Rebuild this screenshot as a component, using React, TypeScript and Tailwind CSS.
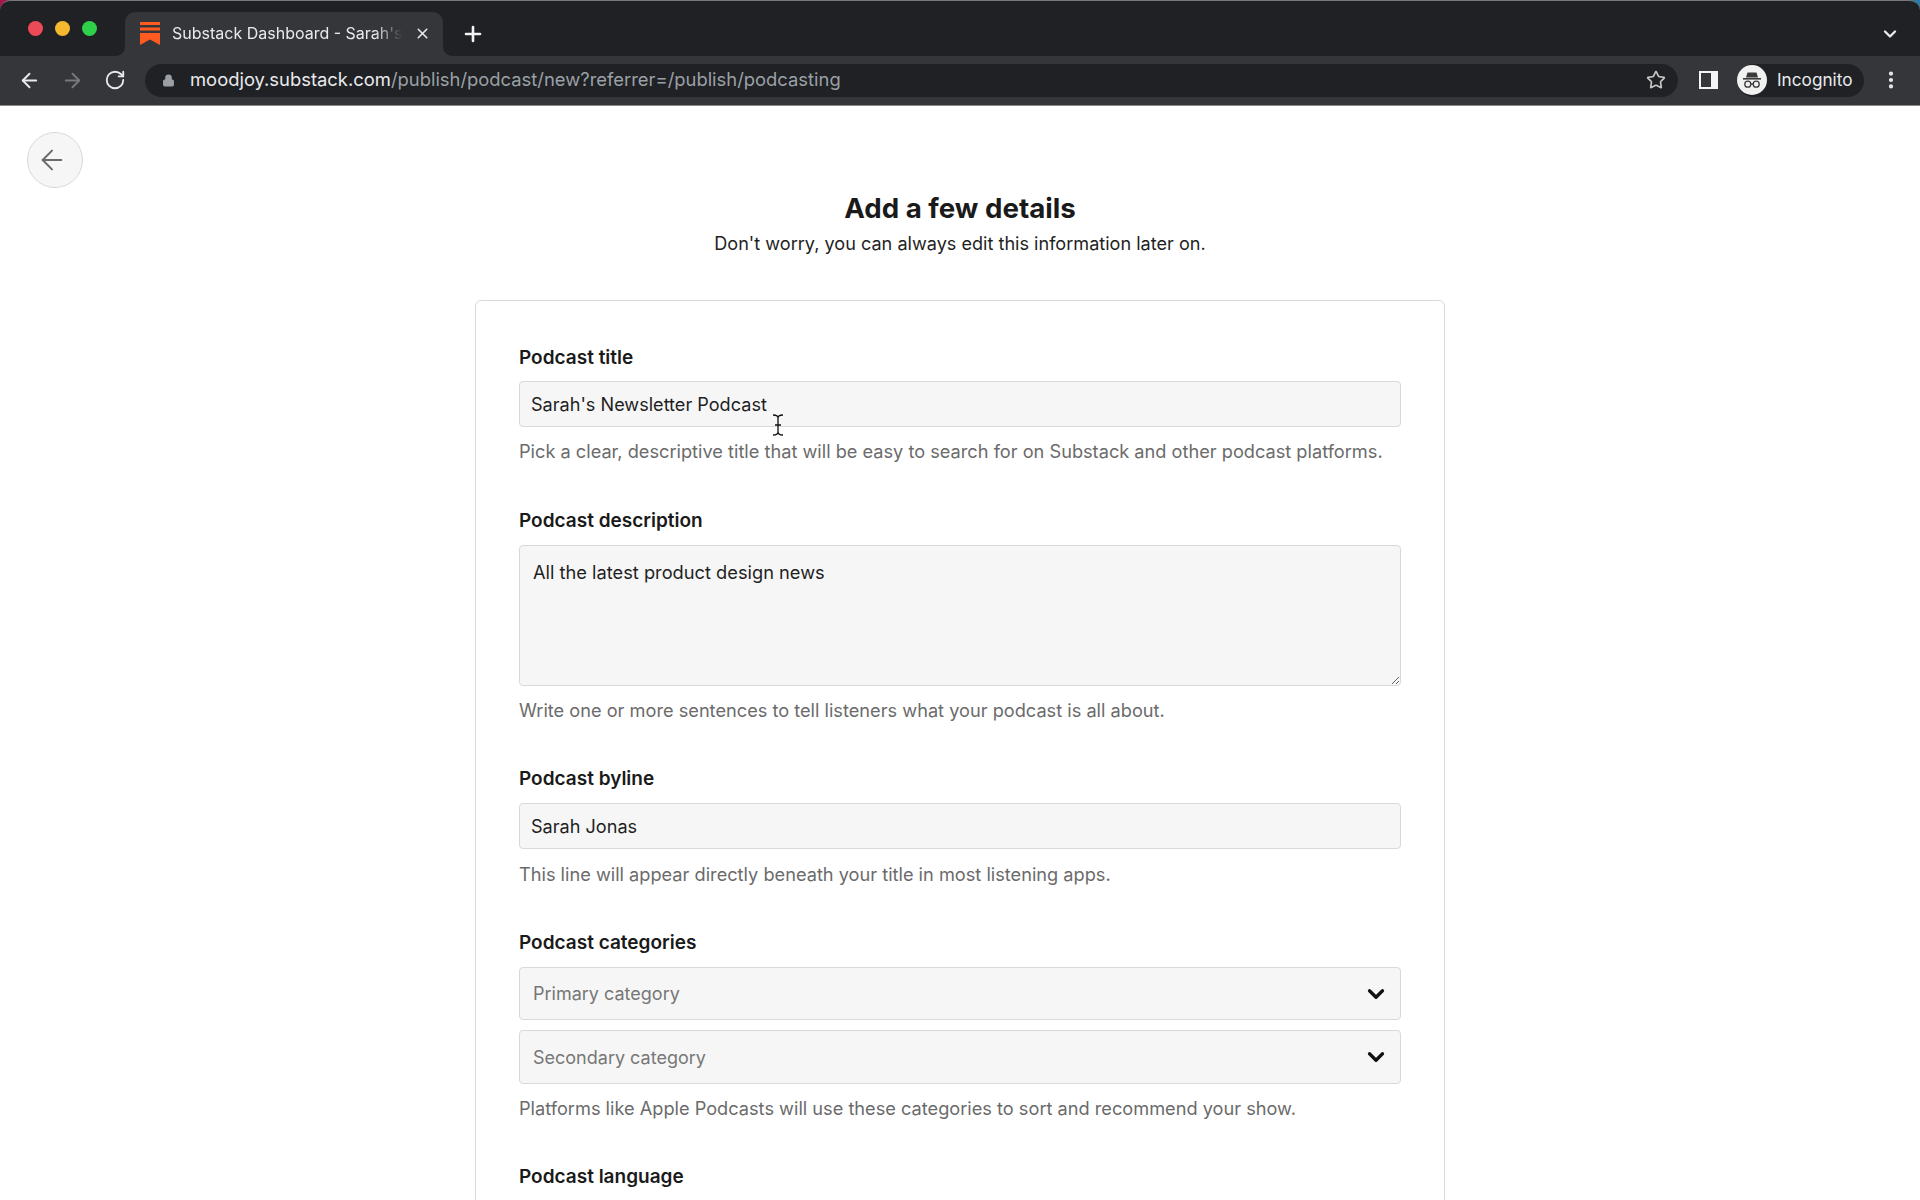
import { ArrowLeft, ArrowRight, ChevronDown, Lock, MoreVertical, Plus, RotateCw, Star, X } from 'lucide-react';

function Field({ label, hint, tight, children }: { label: string; hint?: string; tight?: boolean; children?: React.ReactNode }) {
  return (
    <div className={tight ? 'pb-px' : ''}>
      <div className={`text-[19px] leading-[24px] font-semibold text-[#1a1a1a] ${tight ? 'mb-[11px]' : 'mb-[12px]'}`}>{label}</div>
      {children}
      {hint && <div className="mt-[11px] text-[18.2px] leading-[26px] text-[#6b6b6b]">{hint}</div>}
    </div>
  );
}

function TextInput({ value }: { value: string }) {
  return (
    <input
      readOnly
      value={value}
      className="block w-full h-[46px] px-[11px] text-[18.1px] text-[#1f1f1f] bg-[#f6f6f6] border border-[#d9d9d9] rounded-[4px] outline-none"
    />
  );
}

function SelectBox({ placeholder, tall }: { placeholder: string; tall?: boolean }) {
  return (
    <div className={`flex items-center justify-between ${tall ? 'h-[54px]' : 'h-[53px]'} pl-[13px] pr-[11px] bg-[#f6f6f6] border border-[#d9d9d9] rounded-[4px]`}>
      <span className="text-[18px] text-[#777777]">{placeholder}</span>
      <ChevronDown className="w-[26px] h-[26px] text-[#111111]" strokeWidth={3} />
    </div>
  );
}

function Favicon() {
  return (
    <svg width="20" height="23" viewBox="0 0 20 23" className="shrink-0">
      <rect x="0" y="0" width="20" height="3" fill="#ff5a1f" />
      <rect x="0" y="5.5" width="20" height="3" fill="#ff5a1f" />
      <path d="M0 11h20v12l-10-5.5L0 23z" fill="#ff5a1f" />
    </svg>
  );
}

function IncognitoIcon() {
  return (
    <svg width="30" height="30" viewBox="0 0 30 30">
      <circle cx="15" cy="15" r="15" fill="#f1f1f1" />
      <path d="M10.5 7.5h9l1.5 5h-12z" fill="#3a3a3c" />
      <rect x="6" y="13" width="18" height="1.6" fill="#3a3a3c" />
      <circle cx="10.8" cy="19.2" r="3" fill="none" stroke="#3a3a3c" strokeWidth="1.3" />
      <circle cx="19.2" cy="19.2" r="3" fill="none" stroke="#3a3a3c" strokeWidth="1.3" />
      <path d="M13.8 19h2.4" stroke="#3a3a3c" strokeWidth="1.3" />
    </svg>
  );
}

function Tab() {
  return (
    <div className="relative flex items-center w-[318px] h-[44px] pl-[15px] pr-[12px] pb-[2px] bg-[#35363a] rounded-t-[10px]">
      <svg width="10" height="10" viewBox="0 0 10 10" className="absolute left-[-10px] bottom-0">
        <path d="M10 0v10H0C6 10 10 6 10 0z" fill="#35363a" />
      </svg>
      <svg width="10" height="10" viewBox="0 0 10 10" className="absolute right-[-10px] bottom-0">
        <path d="M0 0v10h10C4 10 0 6 0 0z" fill="#35363a" />
      </svg>
      <Favicon />
      <span className="ml-[12px] w-[230px] whitespace-nowrap text-[16px] text-[#e8eaed] [mask-image:linear-gradient(to_right,black_88%,transparent)]">
        Substack Dashboard - Sarah's
      </span>
      <X className="ml-auto w-[17px] h-[17px] text-[#e8eaed]" strokeWidth={2.2} />
    </div>
  );
}

function Toolbar() {
  return (
    <div className="flex items-center h-[50px] pb-px bg-[#35363a] border-b border-[#8a8a8a]">
      <ArrowLeft className="ml-[18px] w-[23px] h-[23px] text-[#e8eaed]" strokeWidth={2} />
      <ArrowRight className="ml-[20px] w-[23px] h-[23px] text-[#77787b]" strokeWidth={2} />
      <RotateCw className="ml-[20px] w-[22px] h-[22px] text-[#e8eaed]" strokeWidth={2} />
      <div className="flex items-center ml-[19px] w-[1533px] h-[33px] pl-[17px] pr-[12px] bg-[#202124] rounded-full">
        <Lock className="w-[13px] h-[13px] text-[#9aa0a6]" fill="#9aa0a6" strokeWidth={2} />
        <span className="ml-[15px] text-[18.4px] text-[#e8eaed] whitespace-nowrap">
          moodjoy.substack.com
          <span className="text-[#9aa0a6]">/publish/podcast/new?referrer=/publish/podcasting</span>
        </span>
        <Star className="ml-auto w-[20px] h-[20px] text-[#c4c7c5]" strokeWidth={2} />
      </div>
      <div className="ml-[21px] flex w-[19px] h-[18px] bg-[#f1f3f4] p-[2px] pr-[7px]">
        <div className="flex-1 bg-[#35363a]" />
      </div>
      <div className="flex items-center ml-[19px] w-[127px] h-[33px] bg-[#202124] rounded-full">
        <IncognitoIcon />
        <span className="ml-[10px] text-[17.2px] text-[#e8eaed]">Incognito</span>
      </div>
      <MoreVertical className="ml-[16px] w-[22px] h-[22px] text-[#e8eaed]" strokeWidth={2.6} />
    </div>
  );
}

export default function App() {
  return (
    <div className="relative w-[1920px] h-[1200px] overflow-hidden bg-white font-['Inter',sans-serif]">
      <div className="bg-[linear-gradient(to_right,#a8144e_50%,#2a7ba8_50%)]">
        <div className="flex items-end h-[56px] pl-[125px] bg-[#202124] rounded-t-[10px] border-t border-[#77787b]">
          <div className="absolute left-[28px] top-[21px] flex gap-[12px]">
            <span className="w-[15px] h-[15px] rounded-full bg-[#ec4a57]" />
            <span className="w-[15px] h-[15px] rounded-full bg-[#f5b82e]" />
            <span className="w-[15px] h-[15px] rounded-full bg-[#2fd14a]" />
          </div>
          <Tab />
          <Plus className="ml-[18px] mb-[10px] w-[24px] h-[24px] text-[#f1f3f4]" strokeWidth={2.6} />
          <ChevronDown className="ml-auto mr-[20px] mb-[12px] w-[20px] h-[20px] text-[#e8eaed]" strokeWidth={2.8} />
        </div>
      </div>
      <Toolbar />

      <div className="flex">
        <div className="w-[475px] shrink-0 pl-[27px] pt-[26px]">
          <div className="flex items-center justify-center w-[56px] h-[56px] rounded-full bg-[#f6f6f6] border border-[#d9d9d9]">
            <ArrowLeft className="mr-[6px] w-[32px] h-[32px] text-[#6b6b6b]" strokeWidth={1.5} />
          </div>
        </div>
        <div className="w-[970px] shrink-0">
          <h1 className="pt-[84px] text-center text-[27.7px] leading-[36px] font-bold text-[#1a1a1a]">Add a few details</h1>
          <p className="mt-[3px] text-center text-[18.1px] leading-[28px] text-[#1f1f1f]">
            Don't worry, you can always edit this information later on.
          </p>
          <div className="mt-[43px] flex flex-col gap-[44px] px-[43px] pt-[45px] pb-[40px] border border-[#d9d9d9] rounded-[6px]">
            <Field
              tight
              label="Podcast title"
              hint="Pick a clear, descriptive title that will be easy to search for on Substack and other podcast platforms."
            >
              <TextInput value="Sarah's Newsletter Podcast" />
            </Field>
            <Field label="Podcast description" hint="Write one or more sentences to tell listeners what your podcast is all about.">
              <textarea
                readOnly
                value="All the latest product design news"
                className="block w-full h-[141px] px-[13px] py-[13px] text-[18.25px] text-[#1f1f1f] bg-[#f6f6f6] border border-[#d9d9d9] rounded-[4px] outline-none"
              />
            </Field>
            <Field label="Podcast byline" hint="This line will appear directly beneath your title in most listening apps.">
              <div className="pb-px">
                <TextInput value="Sarah Jonas" />
              </div>
            </Field>
            <Field label="Podcast categories" hint="Platforms like Apple Podcasts will use these categories to sort and recommend your show.">
              <div className="flex flex-col gap-[10px]">
                <SelectBox placeholder="Primary category" />
                <SelectBox placeholder="Secondary category" tall />
              </div>
            </Field>
            <Field label="Podcast language" />
          </div>
        </div>
      </div>

      {/* text cursor sitting over the form */}
      <svg width="12" height="22" viewBox="0 0 12 22" className="absolute left-[772px] top-[414px]">
        <path d="M1 1c3 0 5 1 5 3v14c0 2-2 3-5 3M11 1c-3 0-5 1-5 3v14c0 2 2 3 5 3M3 11h6" fill="none" stroke="#111111" strokeWidth="1.3" />
      </svg>
    </div>
  );
}
